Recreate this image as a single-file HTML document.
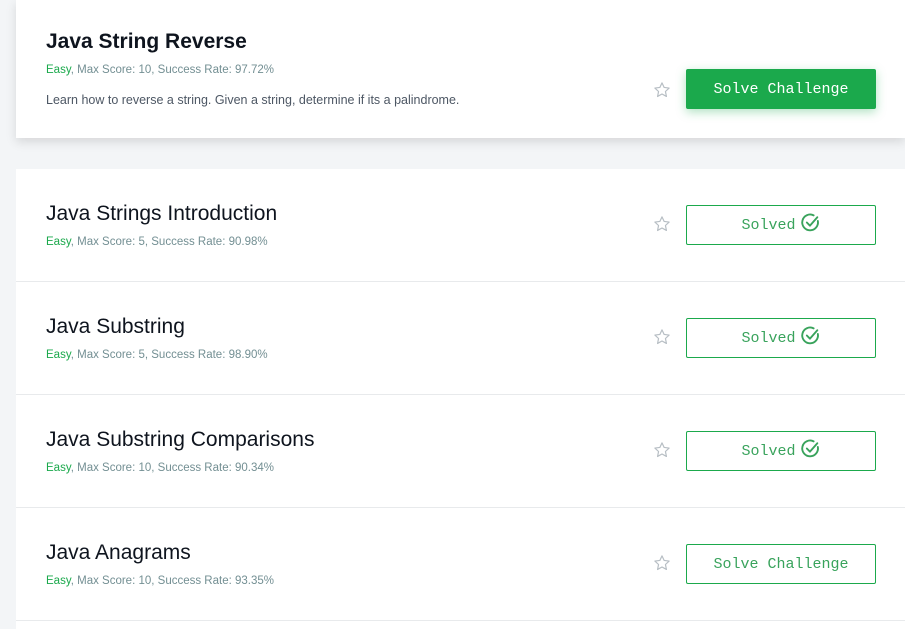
<!DOCTYPE html>
<html><head><meta charset="utf-8"><style>
body{margin:0;width:905px;height:601px;background:#f3f5f7;position:relative;overflow:hidden;font-family:"Liberation Sans",sans-serif}
.card{position:absolute;left:16px;right:0;background:#fff}
.top{top:0;height:138px;box-shadow:0 4px 10px rgba(0,0,0,.12)}
.list{top:169px;height:460px}
.row{position:absolute;left:0;right:0;height:112px;border-bottom:1px solid #e8eaec}
.t{position:absolute;left:30px;font-size:21px;color:#0e141e;white-space:nowrap}
.m{position:absolute;left:30px;font-size:11.5px;color:#738f93;white-space:nowrap}
.m b{font-weight:normal;color:#1ba94c}
.d{position:absolute;left:30px;top:93px;font-size:12.5px;color:#4d5764}
.star{position:absolute;left:637px;width:18px;height:18px}
.btn{position:absolute;left:670px;width:188px;height:38px;border:1px solid #1ba94c;border-radius:2px;font-family:"Liberation Mono",monospace;font-size:15px;color:#39a35c;text-align:center;line-height:40px;box-sizing:content-box}
.btn.g{background:#1ba94c;color:#fff;box-shadow:0 3px 10px rgba(27,169,76,.35)}
.btn svg{vertical-align:-4px;margin-left:4px}
</style></head><body>
<div class="card top">
<div class="t" style="top:30px;font-weight:bold">Java String Reverse</div>
<div class="m" style="top:64px"><b>Easy</b>, Max Score: 10, Success Rate: 97.72%</div>
<div class="d">Learn how to reverse a string. Given a string, determine if its a palindrome.</div>
<svg class="star" style="top:81px" viewBox="0 0 24 24"><path d="M12 2.5l2.9 6.1 6.6.8-4.9 4.6 1.3 6.6L12 17.3l-5.9 3.3 1.3-6.6-4.9-4.6 6.6-.8z" fill="none" stroke="#b7bec4" stroke-width="1.6" stroke-linejoin="round"/></svg>
<div class="btn g" style="top:69px">Solve Challenge</div>
</div>
<div class="card list">
<div class="row" style="top:0">
<div class="t" style="top:33px">Java Strings Introduction</div>
<div class="m" style="top:67px"><b>Easy</b>, Max Score: 5, Success Rate: 90.98%</div>
<svg class="star" style="top:46px" viewBox="0 0 24 24"><path d="M12 2.5l2.9 6.1 6.6.8-4.9 4.6 1.3 6.6L12 17.3l-5.9 3.3 1.3-6.6-4.9-4.6 6.6-.8z" fill="none" stroke="#b7bec4" stroke-width="1.6" stroke-linejoin="round"/></svg>
<div class="btn" style="top:36px">Solved<svg width="21" height="21" viewBox="0 0 20 20"><path d="M17 8.5A7.5 7.5 0 1 1 13 3.2" fill="none" stroke="#39a35c" stroke-width="1.8" stroke-linecap="round"/><path d="M6.5 10l3 3 7-8" fill="none" stroke="#39a35c" stroke-width="1.8" stroke-linecap="round" stroke-linejoin="round"/></svg></div>
</div>
<div class="row" style="top:113px">
<div class="t" style="top:33px">Java Substring</div>
<div class="m" style="top:67px"><b>Easy</b>, Max Score: 5, Success Rate: 98.90%</div>
<svg class="star" style="top:46px" viewBox="0 0 24 24"><path d="M12 2.5l2.9 6.1 6.6.8-4.9 4.6 1.3 6.6L12 17.3l-5.9 3.3 1.3-6.6-4.9-4.6 6.6-.8z" fill="none" stroke="#b7bec4" stroke-width="1.6" stroke-linejoin="round"/></svg>
<div class="btn" style="top:36px">Solved<svg width="21" height="21" viewBox="0 0 20 20"><path d="M17 8.5A7.5 7.5 0 1 1 13 3.2" fill="none" stroke="#39a35c" stroke-width="1.8" stroke-linecap="round"/><path d="M6.5 10l3 3 7-8" fill="none" stroke="#39a35c" stroke-width="1.8" stroke-linecap="round" stroke-linejoin="round"/></svg></div>
</div>
<div class="row" style="top:226px">
<div class="t" style="top:33px">Java Substring Comparisons</div>
<div class="m" style="top:67px"><b>Easy</b>, Max Score: 10, Success Rate: 90.34%</div>
<svg class="star" style="top:46px" viewBox="0 0 24 24"><path d="M12 2.5l2.9 6.1 6.6.8-4.9 4.6 1.3 6.6L12 17.3l-5.9 3.3 1.3-6.6-4.9-4.6 6.6-.8z" fill="none" stroke="#b7bec4" stroke-width="1.6" stroke-linejoin="round"/></svg>
<div class="btn" style="top:36px">Solved<svg width="21" height="21" viewBox="0 0 20 20"><path d="M17 8.5A7.5 7.5 0 1 1 13 3.2" fill="none" stroke="#39a35c" stroke-width="1.8" stroke-linecap="round"/><path d="M6.5 10l3 3 7-8" fill="none" stroke="#39a35c" stroke-width="1.8" stroke-linecap="round" stroke-linejoin="round"/></svg></div>
</div>
<div class="row" style="top:339px">
<div class="t" style="top:33px">Java Anagrams</div>
<div class="m" style="top:67px"><b>Easy</b>, Max Score: 10, Success Rate: 93.35%</div>
<svg class="star" style="top:46px" viewBox="0 0 24 24"><path d="M12 2.5l2.9 6.1 6.6.8-4.9 4.6 1.3 6.6L12 17.3l-5.9 3.3 1.3-6.6-4.9-4.6 6.6-.8z" fill="none" stroke="#b7bec4" stroke-width="1.6" stroke-linejoin="round"/></svg>
<div class="btn" style="top:36px">Solve Challenge</div>
</div>
</div>
</body></html>
